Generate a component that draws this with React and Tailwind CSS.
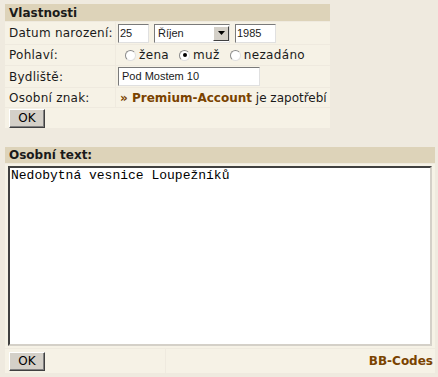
import React from 'react';

const label = "bg-[#f6f2e6] pl-[4px] flex items-center whitespace-nowrap tracking-[0.25px] overflow-hidden";
const value = "bg-[#f6f2e6] px-[2px] flex items-center whitespace-nowrap";

const Radio = ({ checked }) => (
  <span className="inline-flex w-[11px] h-[11px] rounded-full bg-white border border-[#8a8a8a] border-r-[#e0e0e0] border-b-[#e0e0e0] items-center justify-center mr-[3px]">
    {checked && <span className="w-[4px] h-[4px] rounded-full bg-black" />}
  </span>
);

const Btn = () => (
  <button className="w-[36px] h-[19px] bg-[#d4d0c8] border border-[#fff] border-r-[#404040] border-b-[#404040] text-[12px] leading-none text-black font-['DejaVu_Sans',sans-serif] shadow-[inset_-1px_-1px_0_#808080]">
    OK
  </button>
);

export default function App() {
  return (
    <div className="w-[438px] h-[377px] bg-[#efeadf] pt-[4px] pl-[5px] font-['DejaVu_Sans',sans-serif] text-[12px] text-[#1a1a1a] overflow-hidden">
      <div className="w-[325px] grid grid-cols-[110px_1fr] gap-[1px]">
        <div className="col-span-2 bg-[#ddd3b9] h-[17px] px-[4px] font-bold flex items-center">Vlastnosti</div>

        <div className={`${label} h-[22px]`}>Datum narození:</div>
        <div className={`${value} h-[22px] gap-[5px] font-['Liberation_Sans',sans-serif] text-[11px]`}>
          <div className="w-[31px] h-[19px] bg-white border border-[#7a7a7a] border-r-[#e0e0e0] border-b-[#e0e0e0] px-[1px] flex items-center">25</div>
          <div className="w-[76px] h-[19px] bg-white border border-[#7a7a7a] border-r-[#e0e0e0] border-b-[#e0e0e0] flex items-center justify-between pl-[3px]">
            <span>Říjen</span>
            <span className="w-[16px] h-[15px] bg-[#d4d0c8] border border-[#fff] border-r-[#404040] border-b-[#404040] flex items-center justify-center">
              <svg width="7" height="4" viewBox="0 0 7 4"><path d="M0 0h7L3.5 4z" fill="#000" /></svg>
            </span>
          </div>
          <div className="w-[41px] h-[19px] bg-white border border-[#7a7a7a] border-r-[#e0e0e0] border-b-[#e0e0e0] px-[1px] flex items-center">1985</div>
        </div>

        <div className={`${label} h-[20px]`}>Pohlaví:</div>
        <div className={`${value} h-[20px] pl-[9px] tracking-[0.35px]`}>
          <Radio /> <span className="mr-[10px]">žena</span>
          <Radio checked /> <span className="mr-[10px]">muž</span>
          <Radio /> <span>nezadáno</span>
        </div>

        <div className={`${label} h-[21px]`}>Bydliště:</div>
        <div className={`${value} h-[21px]`}>
          <div className="w-[142px] h-[19px] bg-white border border-[#7a7a7a] border-r-[#e0e0e0] border-b-[#e0e0e0] px-[3px] flex items-center font-['Liberation_Sans',sans-serif] text-[11px]">Pod Mostem 10</div>
        </div>

        <div className={`${label} h-[19px]`}>Osobní znak:</div>
        <div className={`${value} h-[19px] pl-[4px]`}>
          <span className="font-bold text-[#7a4300]">» Premium-Account</span>&nbsp;je zapotřebí
        </div>

        <div className="col-span-2 bg-[#f6f2e6] h-[20px] px-[4px] flex items-center">
          <Btn />
        </div>
      </div>

      <div className="w-[430px] mt-[19px] flex flex-col gap-[1px]">
        <div className="bg-[#ddd3b9] h-[16px] px-[4px] font-bold flex items-center">Osobní text:</div>
        <div className="bg-[#f6f2e6] h-[184px] px-[3px] py-[2px]">
          <div className="w-full h-[180px] bg-white border-2 border-[#404040] border-r-[#d4d0c8] border-b-[#d4d0c8] px-[1px] font-['Liberation_Mono',monospace] text-[13px] leading-[15px] text-black">
            Nedobytná vesnice Loupežníků
          </div>
        </div>
        <div className="grid grid-cols-[160px_1fr] gap-[1px] h-[24px]">
          <div className="bg-[#f6f2e6] px-[4px] flex items-center"><Btn /></div>
          <div className="bg-[#f6f2e6] px-[2px] flex items-center justify-end font-bold text-[#7a4300]">BB-Codes</div>
        </div>
      </div>
    </div>
  );
}
